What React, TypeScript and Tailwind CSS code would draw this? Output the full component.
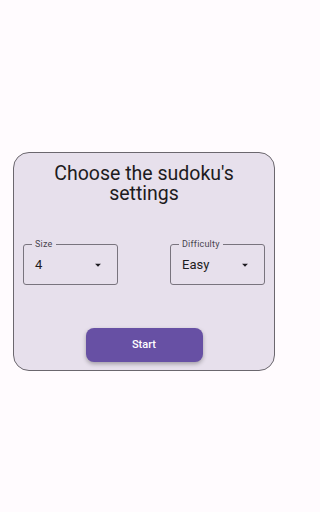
import { ReactNode } from "react";

function DropArrow() {
  return (
    <svg viewBox="0 0 24 24" className="w-[14px] h-[14px] fill-[#1d1b20]">
      <path d="M7 10l5 5 5-5z" />
    </svg>
  );
}

function Select({ label, value }: { label: string; value: ReactNode }) {
  return (
    <div className="relative w-[95px] h-[41px] rounded-[3px] border border-[#79747e] flex items-center justify-between pl-[11px] pr-[12px]">
      <span className="absolute -top-[6px] left-[8px] px-[3px] bg-[#e7e0ec] text-[9px] leading-[10px] text-[#49454f] tracking-[0.2px]">
        {label}
      </span>
      <span className="text-[13px] text-[#1d1b20]">{value}</span>
      <DropArrow />
    </div>
  );
}

export default function App() {
  return (
    <div className="w-full min-h-screen bg-[#fffbfe] pt-[152px] font-['Roboto',sans-serif]">
      <div className="w-[262px] mx-[13px] h-[219px] rounded-[16px] border border-[#6b676e] bg-[#e7e0ec] flex flex-col items-center pt-[11px]">
        <h1 className="text-[19.5px] leading-[20px] text-[#1d1b20] text-center">
          Choose the sudoku's
          <br />
          settings
        </h1>

        <div className="w-full flex justify-between pl-[9px] pr-[9px] mt-[40px]">
          <Select label="Size" value="4" />
          <Select label="Difficulty" value="Easy" />
        </div>

        <button className="mt-[43px] w-[117px] h-[34px] rounded-[8px] bg-[#6750a4] text-white text-[11px] font-medium shadow-[0_2px_4px_rgba(0,0,0,0.3)]">
          Start
        </button>
      </div>
    </div>
  );
}
